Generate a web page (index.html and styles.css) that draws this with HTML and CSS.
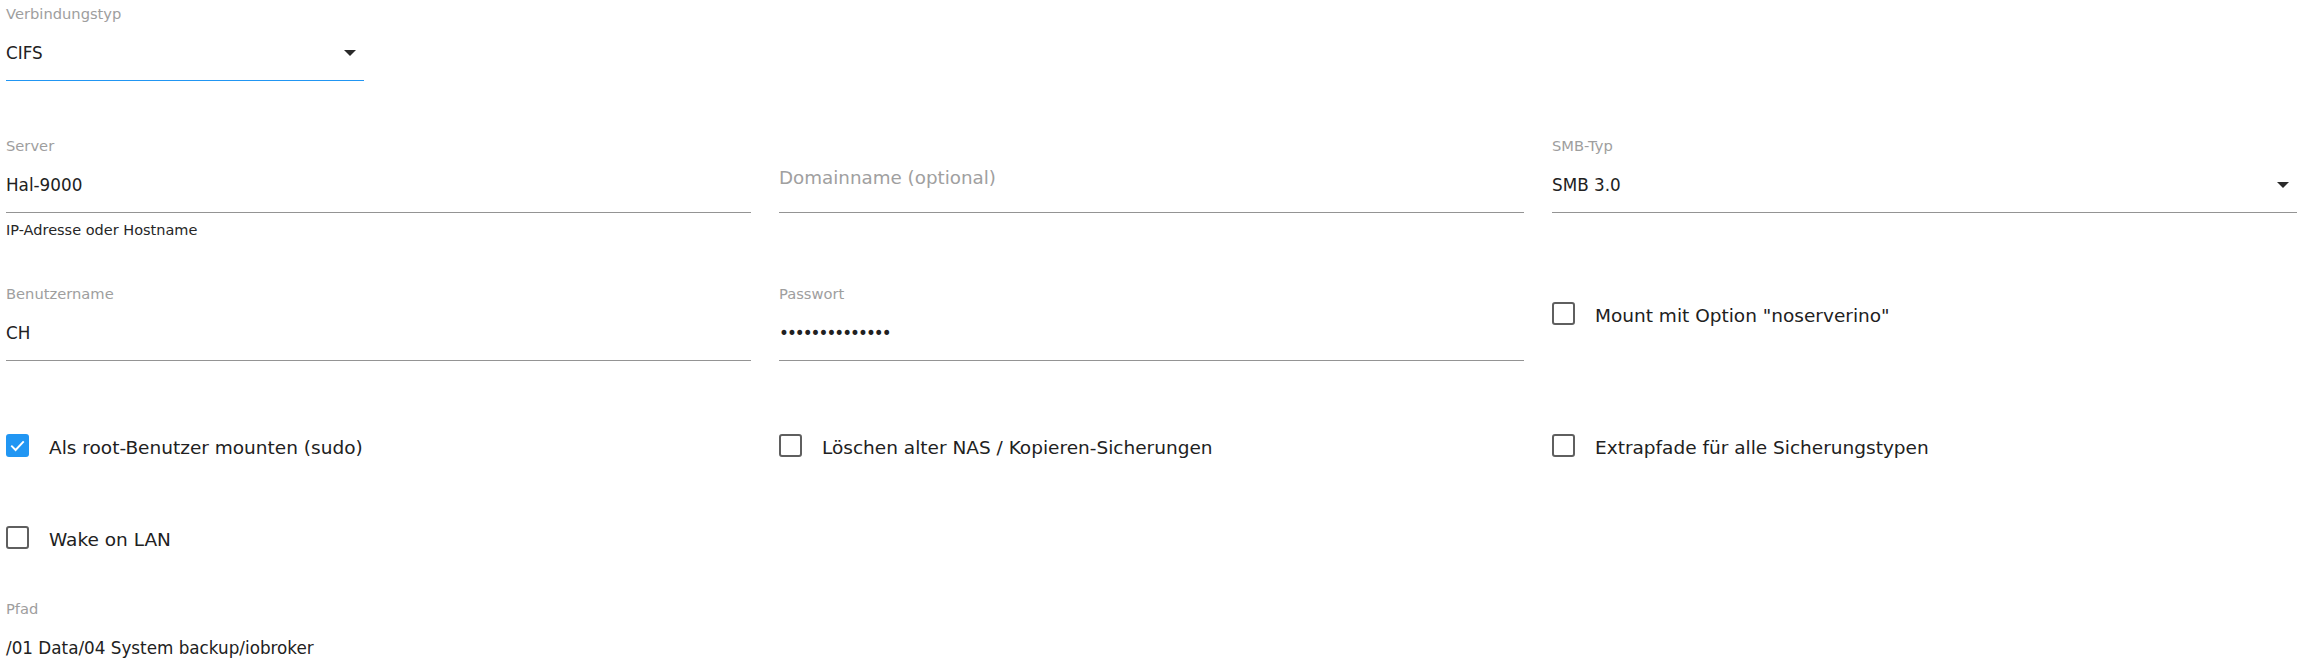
FILE: index.html
```html
<!DOCTYPE html>
<html lang="de">

<head>
    <meta charset="UTF-8">
    <meta name="viewport" content="width=device-width, initial-scale=1.0">
    <title>NAS Verbindung</title>
    <link rel="stylesheet" href="styles.css">
</head>

<body>

    <div class="form">

        <!-- Verbindungstyp -->
        <div class="row row-first">
            <div class="field select connection">
                <div class="field-label">Verbindungstyp</div>
                <div class="field-input focused">
                    <span>CIFS</span>
                    <span class="arrow"></span>
                </div>
            </div>
        </div>

        <!-- Server / Domain / SMB -->
        <div class="row row-server">
            <div class="field">
                <div class="field-label">Server</div>
                <div class="field-input"><span>Hal-9000</span></div>
                <div class="helper">IP-Adresse oder Hostname</div>
            </div>
            <div class="field">
                <div class="field-label"></div>
                <div class="field-input"><span class="placeholder">Domainname (optional)</span></div>
            </div>
            <div class="field select">
                <div class="field-label">SMB-Typ</div>
                <div class="field-input">
                    <span>SMB 3.0</span>
                    <span class="arrow"></span>
                </div>
            </div>
        </div>

        <!-- Benutzer / Passwort -->
        <div class="row row-user">
            <div class="field">
                <div class="field-label">Benutzername</div>
                <div class="field-input"><span>CH</span></div>
            </div>
            <div class="field">
                <div class="field-label">Passwort</div>
                <div class="field-input"><span class="password">••••••••••••••</span></div>
            </div>
            <label class="checkbox in-field">
                <span class="box"></span>
                <span class="check-label">Mount mit Option "noserverino"</span>
            </label>
        </div>

        <div class="row row-checks">
            <label class="checkbox">
                <span class="box checked">
                    <svg viewBox="0 0 24 24" width="23" height="23"><path d="M5.5 12.2 L10 16.7 L18.5 7.6" fill="none" stroke="#fff" stroke-width="2"/></svg>
                </span>
                <span class="check-label">Als root-Benutzer mounten (sudo)</span>
            </label>
            <label class="checkbox">
                <span class="box"></span>
                <span class="check-label">Löschen alter NAS / Kopieren-Sicherungen</span>
            </label>
            <label class="checkbox">
                <span class="box"></span>
                <span class="check-label">Extrapfade für alle Sicherungstypen</span>
            </label>
        </div>

        <div class="row row-wol">
            <label class="checkbox">
                <span class="box"></span>
                <span class="check-label">Wake on LAN</span>
            </label>
        </div>

        <!-- Pfad -->
        <div class="row row-path">
            <div class="field plain">
                <div class="field-label">Pfad</div>
                <div class="field-input"><span>/01 Data/04 System backup/iobroker</span></div>
            </div>
        </div>

    </div>

</body>

</html>
```

FILE: styles.css
```css
body {
    margin: 0;
    background-color: #fff;
    font-family: "DejaVu Sans", sans-serif;
    color: #212121;
}

.form {
    padding: 5px 1px 0 6px;
}

.row {
    display: grid;
    grid-template-columns: repeat(3, 1fr);
    column-gap: 28px;
}

.row-server {
    margin-top: 56px;
}

.row-user {
    margin-top: 45px;
}

.row-checks {
    margin-top: 63px;
}

.row-wol {
    margin-top: 50px;
}

.row-path {
    margin-top: 42px;
}

.connection {
    width: 358px;
}

/* text fields */
.field-label {
    height: 18px;
    font-size: 14.7px;
    line-height: 18px;
    color: #9e9e9e;
}

.field-input {
    display: flex;
    align-items: center;
    justify-content: space-between;
    margin-top: 18px;
    padding-bottom: 15px;
    height: 24px;
    font-size: 16.8px;
    line-height: 24px;
    border-bottom: 1px solid #949494;
}

.field-input.focused {
    border-bottom-color: #2196f3;
}

.plain .field-input {
    border-bottom: none;
}

.select .field-input {
    padding-right: 8px;
}

.arrow {
    width: 0;
    height: 0;
    border-left: 6px solid transparent;
    border-right: 6px solid transparent;
    border-top: 6px solid #2a2a2a;
}

.placeholder {
    margin-top: -15px;
    font-size: 18.3px;
    color: #a0a0a0;
}

.password {
    font-size: 16.8px;
    letter-spacing: -2px;
}

.helper {
    margin-top: 7px;
    font-size: 14.5px;
    line-height: 20px;
    color: #262626;
}

/* checkboxes */
.checkbox {
    display: flex;
    align-items: center;
    height: 42px;
    font-size: 18.5px;
    line-height: 24px;
    cursor: pointer;
}

.checkbox.in-field {
    align-self: start;
    margin-top: 7px;
}

.box {
    display: flex;
    flex-shrink: 0;
    width: 23px;
    height: 23px;
    margin-right: 20px;
    box-sizing: border-box;
    border: 2.5px solid #5f5f5f;
    border-radius: 3px;
}

.box.checked {
    border: none;
    background-color: #2196f3;
}

.check-label {
    padding-top: 6px;
}
```
